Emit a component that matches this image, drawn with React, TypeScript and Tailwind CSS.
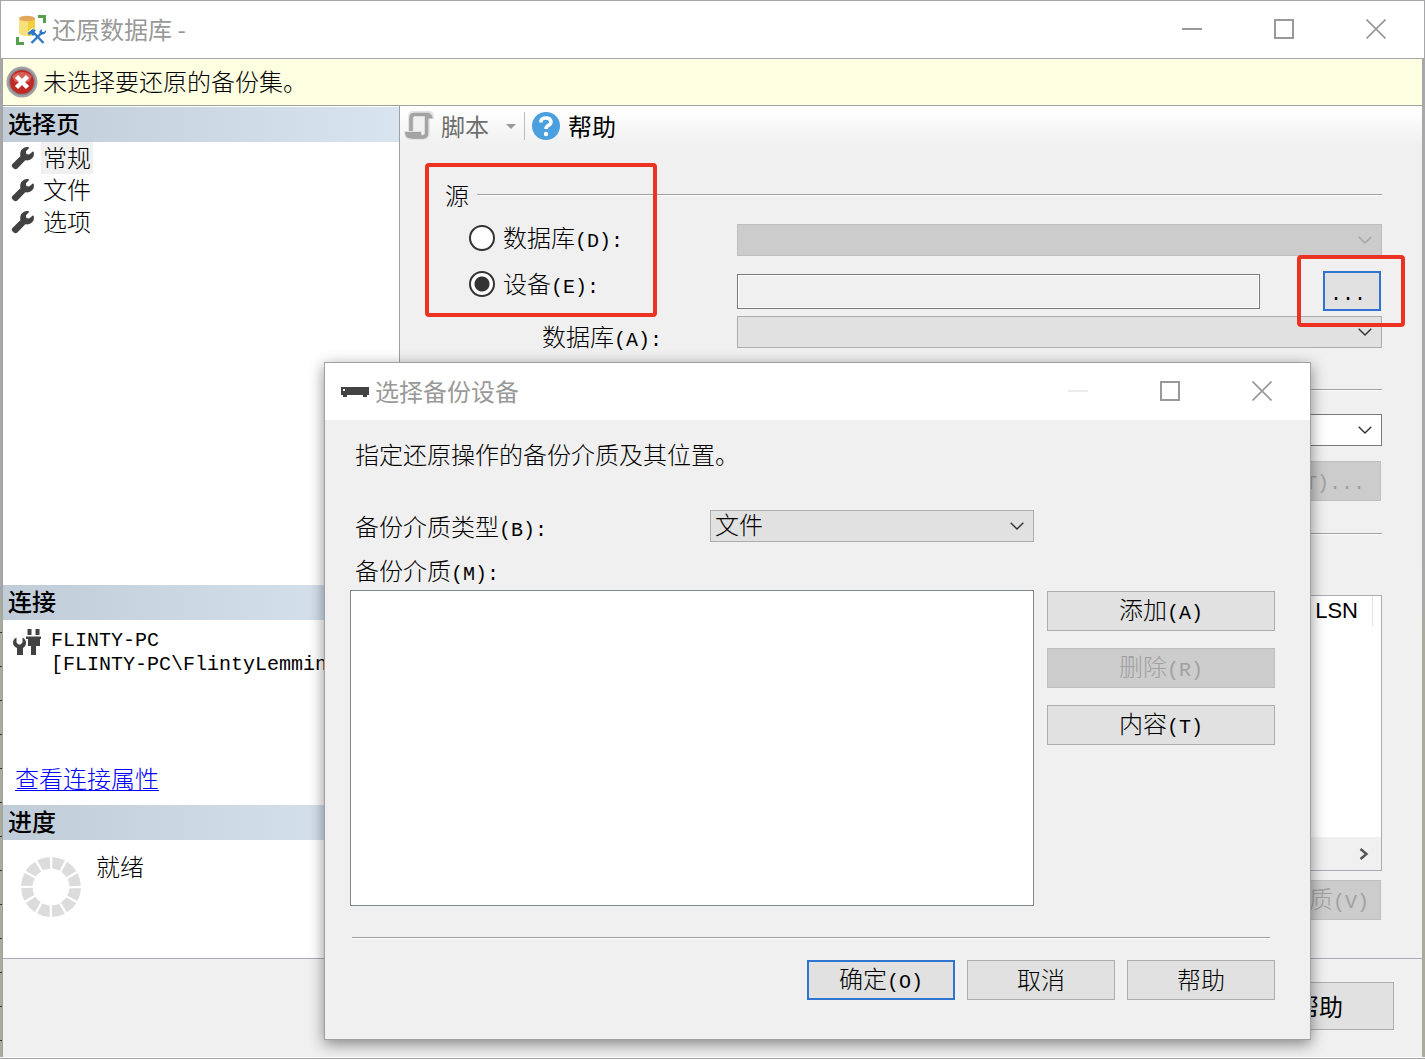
import React from "react";

const SANS = "font-['Noto_Sans_CJK_SC','Noto_Sans',sans-serif]";

/** Half-width Latin run set beside 24px Chinese text. */
function Lat({ children }: { children: React.ReactNode }) {
  return <span className="font-['Liberation_Mono',monospace] text-xl leading-none">{children}</span>;
}

function Wrench() {
  return (
    <svg viewBox="0 0 24 24" className="size-6 shrink-0" aria-hidden="true">
      <path
        transform="translate(24 0) scale(-1 1)"
        fill="#424242"
        stroke="#424242"
        strokeWidth="1.800"
        strokeLinejoin="round"
        d="M21.900 18.600l-8.300-8.200c.7-2.600.2-5-1.500-6.700C10.600 2.200 8.900 1.700 7 1.900L10 5 9.400 8.800 5.500 9.500 2 6.500C1.700 8.600 2 10.300 3.400 11.700c1.700 1.700 4 2.200 6.400 1.500l8.500 8.600c.7.700 1.600.700 2.300 0l1.300-1.300c.6-.6.6-1.300 0-1.900z"
      />
    </svg>
  );
}

function Chevron({ className }: { className: string }) {
  return (
    <svg viewBox="0 0 14 8" className={`pointer-events-none absolute top-3 h-2 w-3.5 ${className}`} fill="none" aria-hidden="true">
      <path d="M0.700 0.700L7 7l6.300-6.300" stroke="currentColor" strokeWidth="1.400" />
    </svg>
  );
}

function WindowButtons({ dimMin = false }: { dimMin?: boolean }) {
  return (
    <div className="flex h-full shrink-0 pb-0.5 pr-0.5 text-[#999]">
      <button aria-label="最小化" disabled={dimMin} className="flex w-[92px] items-center justify-center">
        <span className={dimMin ? "h-0.5 w-5 bg-[#ebebeb]" : "h-0.5 w-5 bg-[#999]"} />
      </button>
      <button aria-label="最大化" className="flex w-[92px] items-center justify-center">
        <span className="size-5 border-2 border-[#999]" />
      </button>
      <button aria-label="关闭" className="flex w-[92px] items-center justify-center">
        <svg viewBox="0 0 20 20" className="size-5" fill="none" aria-hidden="true">
          <path d="M.5.5l19 19M19.500.500l-19 19" stroke="currentColor" strokeWidth="1.700" />
        </svg>
      </button>
    </div>
  );
}

function PanelHeader({ children }: { children: React.ReactNode }) {
  return (
    <h2 className="h-[35px] shrink-0 bg-linear-to-r from-[#c0ccd8] to-[#d8e4f0] pl-[5px] font-medium leading-8">
      {children}
    </h2>
  );
}

function Rule() {
  return <div className="h-0.5 flex-1 border-t border-[#a0a0a0] bg-white" />;
}

const btn = "flex h-10 items-center justify-center border border-[#adadad] bg-[#e1e1e1] pb-0.5 leading-none";
const btnOff = "flex h-10 items-center justify-center border border-[#bfbfbf] bg-[#ccc] pb-0.5 leading-none text-[#a0a0a0]";

const spokes = [0, 1, 2, 3, 4, 5, 6, 7, 8, 9, 10, 11];

function Sidebar() {
  return (
    <aside className="flex w-[397px] shrink-0 flex-col border-r border-[#a0a0a0] bg-white pt-px">
      <PanelHeader>选择页</PanelHeader>
      <nav className="flex-1">
        {["常规", "文件", "选项"].map((t, i) => (
          <a key={t} href="#" className="flex h-8 items-center gap-1 pl-2">
            <Wrench />
            <span className={i === 0 ? "ml-0.5 h-8 bg-[#f0f0f0] px-0.5 leading-[30px]" : "ml-0.5 h-8 px-0.5 leading-[30px]"}>{t}</span>
          </a>
        ))}
      </nav>
      <PanelHeader>连接</PanelHeader>
      <div className="flex h-[185px] flex-col justify-between overflow-hidden pl-2.5">
        <div className="flex gap-2.5 pt-[9px]">
          <svg viewBox="0 0 28 28" className="h-7 w-7 shrink-0" fill="#424242" aria-hidden="true">
            <path d="M14.500 0h4v6h-4zM22.500 0h4v6h-4zM13 7.500h15V10h-1v7h-4v9h-5v-9h-3v-7h-2z" />
            <path d="M3.500 8.500v5l2 2h2l2-2v-5c2.500 1 3.500 3 3.500 5.500S11.500 18 10 19v7H4v-7c-2-1-4-2.500-4-5s1-4.500 3.500-5.500z" />
          </svg>
          <div className="whitespace-nowrap font-['Liberation_Mono',monospace] text-xl leading-6">
            <div>FLINTY-PC</div>
            <div>[FLINTY-PC\FlintyLemmin</div>
          </div>
        </div>
        <a href="#" className="ml-0.5 self-start pb-2.5 leading-[34px] text-[#0000ff] underline decoration-1 underline-offset-2">
          查看连接属性
        </a>
      </div>
      <PanelHeader>进度</PanelHeader>
      <div className="flex h-[118px] gap-3.5 pl-[17px] pt-4">
        <svg viewBox="0 0 62 62" className="size-[62px]" aria-hidden="true">
          {spokes.map((n) => (
            <path key={n} transform={`rotate(${n * 30} 31 31)`} d="M32.300 1a30 30 0 0 1 12.600 3.500L39.500 14.800a18 18 0 0 0-7.200-2.300z" fill="#dcdcdc" />
          ))}
        </svg>
        <span className="-mt-2 leading-9">就绪</span>
      </div>
    </aside>
  );
}

function MainPanel() {
  return (
    <main className="flex min-w-0 flex-1 flex-col">
      <div className={`flex h-10 items-center bg-linear-to-b from-[#fdfdfd] from-20% to-[#f0f0f0] pl-1 font-normal ${SANS}`}>
        <button disabled className="flex items-center text-[#6d6d6d]">
          <svg viewBox="0 0 30 30" className="size-[30px]" aria-hidden="true">
            <path d="M8 0h18q4 0 4 8h-4v13q0 8-7 8H6q-6 0-6-9h4V7q0-7 4-7z" fill="#e2e2e2" />
            <path d="M10 5h13v18h-5v-3h-8z" fill="#f0f0f0" />
            <path d="M7 20V7q0-3.500 3.500-3.500H25M22.500 5v17q0 4-4 4H8" fill="none" stroke="#a3a3a3" strokeWidth="3.500" />
            <path d="M22 2q6.500-.5 6.500 5.500H24zM1 21h16q0 4 3 6.500H7q-6 0-6-6.500z" fill="#a3a3a3" />
          </svg>
          <span className="ml-[7px] leading-none">脚本</span>
          <svg viewBox="0 0 10 5" className="ml-[17px] h-[5px] w-2.5" aria-hidden="true">
            <path d="M0 0h10L5 5z" fill="#999" />
          </svg>
        </button>
        <span className="ml-2 h-7 w-px bg-[#bdbdbd]" />
        <button className="ml-[7px] flex items-center gap-2">
          <svg viewBox="0 0 28 28" className="size-7" aria-hidden="true">
            <circle cx="14" cy="14" r="14" fill="#4a9fdf" />
            <path d="M9 10.500V9q.5-3 5-3t5 3.700q0 2.300-2.600 3.700-2.400 1.200-2.400 3.600" fill="none" stroke="#fff" strokeWidth="3.600" />
            <circle cx="14" cy="22" r="2.200" fill="#fff" />
          </svg>
          <span className="leading-none">帮助</span>
        </button>
      </div>

      <div className="flex flex-1 flex-col pl-[45px] pr-10">
        <section className="relative pt-[34px]">
          <div className="flex h-[30px] items-center gap-2">
            <h3 className="leading-none">源</h3>
            <Rule />
          </div>
          <div className="mt-3.5 flex">
            <div className="flex w-[292px] shrink-0 flex-col pl-6">
              <label className="flex h-7 items-center gap-2">
                <input type="radio" name="src" className="size-[26px] appearance-none rounded-full border-2 border-[#333] bg-white" />
                <span className="leading-none">数据库<Lat>(D):</Lat></span>
              </label>
              <label className="mt-[18px] flex h-7 items-center gap-2">
                <input
                  type="radio"
                  name="src"
                  defaultChecked
                  className="size-[26px] appearance-none rounded-full border-2 border-[#333] bg-white bg-[radial-gradient(circle,#333_0_7px,#fff_8px)]"
                />
                <span className="leading-none">设备<Lat>(E):</Lat></span>
              </label>
              <label htmlFor="srcdb" className="mt-[22px] h-[30px] pl-[73px] leading-8">
                数据库<Lat>(A):</Lat>
              </label>
            </div>
            <div className="min-w-0 flex-1">
              <div className="relative">
                <select aria-label="数据库(D)" disabled className="block h-8 w-full appearance-none border border-[#bfbfbf] bg-[#ccc] opacity-100" />
                <Chevron className="right-2.5 text-[#a5a5a5]" />
              </div>
              <div className="mt-[15px] flex h-10 items-center justify-between">
                <input aria-label="设备(E)" readOnly className="h-[35px] min-w-0 flex-1 border border-[#7a7a7a] bg-[#f0f0f0] px-1 shadow-[inset_0_0_0_1px_#fff]" />
                <div className="relative ml-[63px] mr-px">
                  <button className="flex h-10 w-[58px] items-center justify-center border-2 border-[#2f74d0] bg-[#e1e1e1] pr-2 pt-2">
                    <Lat>...</Lat>
                  </button>
                  <div className="pointer-events-none absolute -inset-y-4 -left-[26px] -right-6 z-10 rounded-sm border-4 border-[#ec3323]" />
                </div>
              </div>
              <div className="relative mt-[5px]">
                <select id="srcdb" className="block h-8 w-full appearance-none border border-[#adadad] bg-[#e1e1e1]" />
                <Chevron className="right-2.5 text-[#333]" />
              </div>
            </div>
          </div>
          <div className="pointer-events-none absolute -left-5 top-[17px] h-[154px] w-[232px] rounded-sm border-4 border-[#ec3323]" />
        </section>

        <section className="mt-[39px] flex flex-col items-end">
          <div className="flex w-full"><Rule /></div>
          <div className="relative mt-[23px] w-[645px]">
            <select aria-label="目标数据库" className="block h-8 w-full appearance-none border border-[#7a7a7a] bg-white" />
            <Chevron className="right-2.5 text-[#333]" />
          </div>
          <button disabled className={`${btnOff} mr-px mt-[15px] w-[176px]`}>
            <span>时间线<Lat>(T)...</Lat></span>
          </button>
        </section>

        <section className="mt-8 flex flex-1 flex-col items-end">
          <div className="flex w-full"><Rule /></div>
          <div className="mt-[60px] flex h-[276px] w-full flex-col border border-[#a9abb5] bg-white">
            <table className="w-full flex-1">
              <thead>
                <tr className="align-top">
                  <th className="pr-2 text-right font-['Liberation_Sans',sans-serif] text-[22px] font-normal leading-[30px]">
                    <span className="inline-block border-r border-[#e2e2e2] pr-3.5">LSN</span>
                  </th>
                </tr>
              </thead>
            </table>
            <div className="flex h-[33px] items-center justify-end bg-[#f0f0f0] pr-3">
              <svg viewBox="0 0 10 12" className="h-3 w-2.5" fill="none" aria-hidden="true">
                <path d="M1.500 1l6 5-6 5" stroke="#555" strokeWidth="2.400" />
              </svg>
            </div>
          </div>
          <button disabled className={`${btnOff} mr-px mt-[9px] w-[204px]`}>
            <span>验证备份介质<Lat>(V)</Lat></span>
          </button>
        </section>
      </div>
    </main>
  );
}

function DeviceDialog() {
  return (
    <div
      role="dialog"
      aria-label="选择备份设备"
      className="absolute left-[324px] right-[114px] top-[362px] z-20 border border-[#a0a0a0] bg-[#f0f0f0] shadow-[0_4px_14px_rgba(0,0,0,0.45)]"
    >
      <div className={`flex h-[57px] items-center bg-white pl-4 font-normal text-[#999] ${SANS}`}>
        <svg viewBox="0 0 28 10" className="h-2.5 w-7" aria-hidden="true">
          <path d="M0 0h28v8h-2v2h-4V8H6v2H2V8H0z" fill="#424242" />
          <path d="M2 2h2v2H2z" fill="#fff" />
        </svg>
        <h2 className="ml-1.5 flex-1 pb-0.5 leading-none">选择备份设备</h2>
        <WindowButtons dimMin />
      </div>
      <div className="pb-[39px] pl-[25px] pr-[35px] pt-[18px]">
        <p className="pl-[5px] leading-8">指定还原操作的备份介质及其位置。</p>
        <div className="mt-10 flex items-center pl-[5px]">
          <label htmlFor="mtype" className="w-[355px] leading-8">备份介质类型<Lat>(B):</Lat></label>
          <div className="relative w-[324px]">
            <select id="mtype" className="block h-8 w-full appearance-none border border-[#adadad] bg-[#e1e1e1] px-1 pb-1 leading-[26px]">
              <option>文件</option>
            </select>
            <Chevron className="right-2.5 text-[#333]" />
          </div>
        </div>
        <label htmlFor="media" className="mt-3 block h-8 pl-[5px] leading-8">备份介质<Lat>(M):</Lat></label>
        <div className="mt-1 flex gap-[13px]">
          <textarea id="media" readOnly className="block h-[316px] min-w-0 flex-1 resize-none border border-[#828790] bg-white" />
          <div className="flex w-[228px] flex-col gap-[17px] pt-px">
            <button className={btn}><span>添加<Lat>(A)</Lat></span></button>
            <button disabled className={btnOff}><span>删除<Lat>(R)</Lat></span></button>
            <button className={btn}><span>内容<Lat>(T)</Lat></span></button>
          </div>
        </div>
        <div className="mr-[5px] mt-[31px] flex pl-0.5"><Rule /></div>
        <div className="mt-[21px] flex justify-end gap-3">
          <button className="flex h-10 w-[148px] items-center justify-center border-2 border-[#2f74d0] bg-[#e1e1e1] pb-0.5 leading-none">
            <span>确定<Lat>(O)</Lat></span>
          </button>
          <button className={`${btn} w-[148px]`}>取消</button>
          <button className={`${btn} w-[148px]`}>帮助</button>
        </div>
      </div>
    </div>
  );
}

export default function App() {
  return (
    <div className={`relative flex min-h-screen flex-col overflow-hidden border-b border-[#a0a0a0] bg-[#f0f0f0] text-2xl font-light text-black ${SANS}`}>
      <header className={`flex h-[59px] items-center border border-[#a6a6a8] bg-white pl-[15px] font-normal text-[#999] ${SANS}`}>
        <svg viewBox="0 0 30 30" className="size-[30px]" aria-hidden="true">
          <path d="M3 3v15c0 4 16 4 16 0V3z" fill="#f8e07a" />
          <path d="M12 4v17c4 0 7-1 7-3V3z" fill="#f3cf3d" />
          <ellipse cx="11" cy="3.500" rx="8" ry="2.800" fill="#e3a75c" />
          <path d="M22 0h8v8h-3V3h-5zM0 22h3v5h5v3H0z" fill="#57a04c" />
          <path d="M12 17l4-4 6 3 7-3 1 6-5 5 3 4h-14l4-6z" fill="#fff" />
          <path d="M15.500 28l11-11M17 17l10.500 11" stroke="#2d78c8" strokeWidth="2.400" />
          <path d="M11.500 18l5-4 3.500 1-1.500 2 .5 2-2 2-2-2-2 1zM23.500 18v-2l2.500-2v3h2l2-2q.5 4-3 4.500h-2z" fill="#2d78c8" />
        </svg>
        <h1 className="ml-1.5 flex-1 pb-0.5 leading-none">还原数据库 -</h1>
        <WindowButtons />
      </header>

      <div className="flex flex-1 flex-col border-b border-white">
        <div className="flex flex-1">
          <div className="flex w-[3px] flex-col justify-end border-r border-[#a0a0a5] bg-[#a8a8aa]">
            <div className="h-[458px] bg-[repeating-linear-gradient(to_bottom,#aaab9b_0_33px,#333_33px_34px)]" />
          </div>
          <div className="flex min-w-0 flex-1 flex-col">
            <div role="alert" className="flex h-[47px] items-center border-b border-[#a0a0a0] bg-[#ffffe1] pl-[3px]">
              <svg viewBox="0 0 32 32" className="size-8" aria-hidden="true">
                <circle cx="16" cy="16" r="15.500" fill="#a3a3a8" />
                <circle cx="16" cy="16" r="13.500" fill="#8a8a90" />
                <circle cx="16" cy="16" r="12" fill="#c02a25" />
                <path d="M6 10q10-8 20 0l-3 6H9z" fill="#d4605a" />
                <path d="M10.500 10.500l11 11M21.500 10.500l-11 11" stroke="#fff" strokeWidth="4.500" />
              </svg>
              <span className="ml-[5px] pb-0.5 leading-none">未选择要还原的备份集。</span>
            </div>
            <div className="flex flex-1 border-b border-[#a9abb5]">
              <Sidebar />
              <MainPanel />
            </div>
            <footer className="flex h-[98px] items-center justify-end pb-1 pr-7">
              <button className={`flex h-12 w-[150px] items-center justify-center border border-[#adadad] bg-[#e1e1e1] font-normal leading-none ${SANS}`}>
                帮助
              </button>
            </footer>
          </div>
          <div className="w-[3px] bg-linear-to-b from-[#a8a8aa] from-50% to-[#aaab9b] to-60%" />
        </div>
      </div>

      <DeviceDialog />
    </div>
  );
}
